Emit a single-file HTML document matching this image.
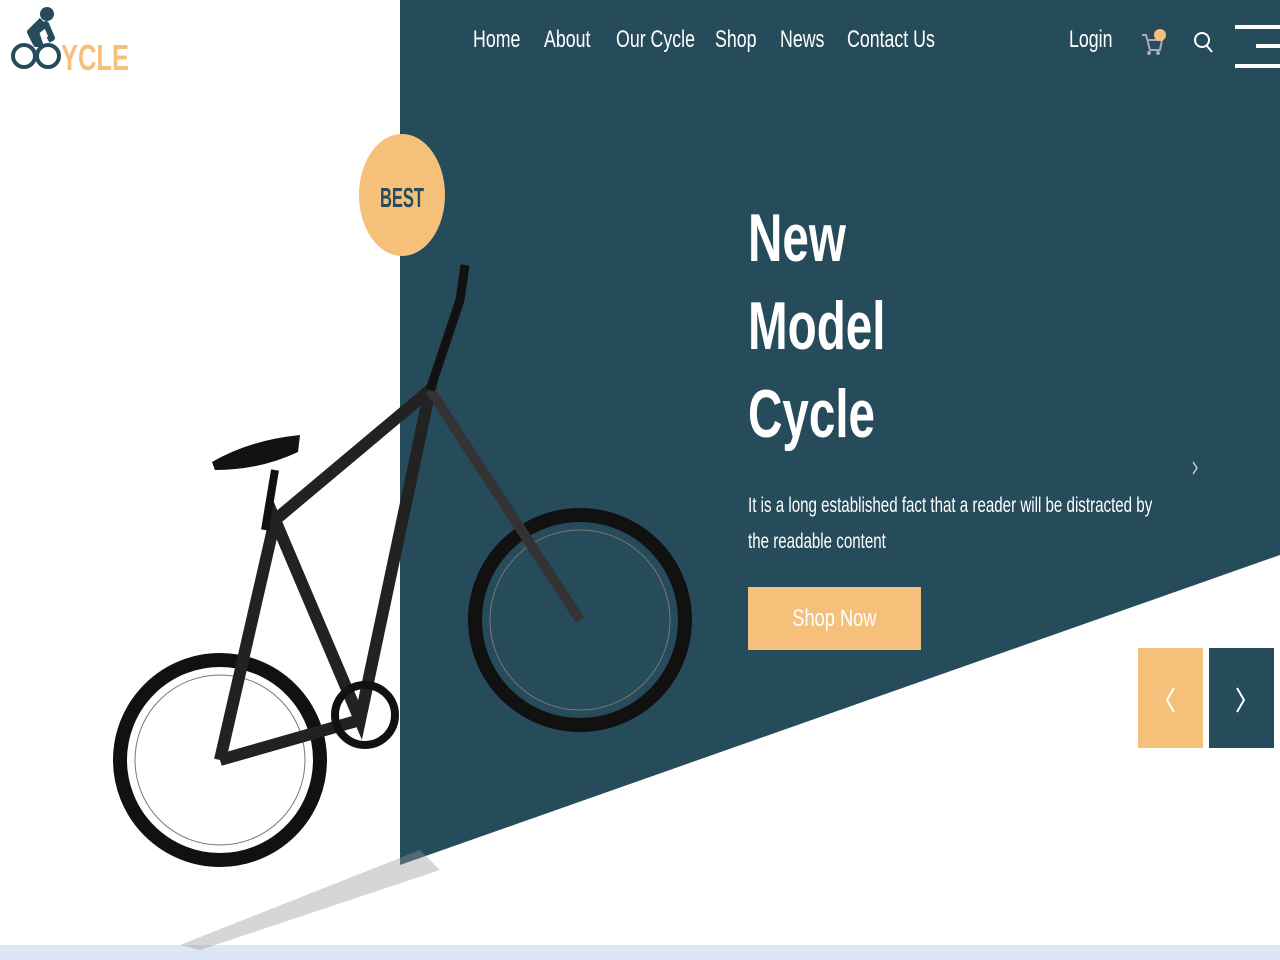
<!DOCTYPE html>
<html><head><meta charset="utf-8"><style>
*{margin:0;padding:0;box-sizing:border-box}
body{width:1280px;height:960px;overflow:hidden;background:#fff;position:relative;font-family:"Liberation Sans",sans-serif}
.n{position:absolute;color:#fff;font-size:24px;top:26px;transform:scaleX(.74);transform-origin:0 0;white-space:nowrap}
.t{position:absolute;color:#fff;transform-origin:0 0}
</style></head><body>
<svg width="1280" height="960" style="position:absolute;left:0;top:0">
<polygon points="400,0 1280,0 1280,555 400,865" fill="#264b5a"/>
<rect x="0" y="945" width="1280" height="15" fill="#dde6f5"/>
<circle cx="47" cy="14" r="7" fill="#264b5a"/>
<path d="M42 20 L30 32 L36 44 L40 44 L36 32 L46 24 L52 38 L48 40" stroke="#264b5a" stroke-width="6" fill="none" stroke-linejoin="round"/>
<circle cx="24" cy="56" r="11" stroke="#264b5a" stroke-width="4" fill="none"/>
<circle cx="48" cy="56" r="11" stroke="#264b5a" stroke-width="4" fill="none"/>
<text x="61" y="70" font-family="Liberation Sans" font-weight="bold" font-size="36" fill="#f5c07a" textLength="68" lengthAdjust="spacingAndGlyphs">YCLE</text>
<ellipse cx="402" cy="195" rx="43" ry="61" fill="#f5c07a"/>
<text x="380" y="207" font-family="Liberation Sans" font-weight="bold" font-size="28" fill="#264b5a" textLength="44" lengthAdjust="spacingAndGlyphs">BEST</text>
<g fill="none" stroke="#111">
<circle cx="220" cy="760" r="100" stroke-width="14"/>
<circle cx="220" cy="760" r="85" stroke-width="1" stroke="#777"/>
<circle cx="580" cy="620" r="105" stroke-width="14"/>
<circle cx="580" cy="620" r="90" stroke-width="1" stroke="#777"/>
<path d="M220 760 L275 520 L360 720 L430 390 L275 520 M220 760 L360 720" stroke-width="12" stroke="#222"/>
<path d="M430 390 L580 620" stroke-width="10" stroke="#333"/>
<path d="M430 390 L460 300 L465 265" stroke-width="9"/>
<circle cx="365" cy="715" r="30" stroke-width="8"/>
<path d="M265 530 L275 470" stroke-width="8"/>
</g>
<path d="M212 462 Q250 440 300 435 L298 452 Q260 470 215 470Z" fill="#111"/>
<path d="M180 945 L420 850 L440 870 L200 950Z" fill="#999" opacity=".4"/>
<path d="M1142 35 L1146 35 L1150 50 L1160 50 L1162 40 L1148 40" stroke="#aab" stroke-width="2" fill="none"/>
<circle cx="1149" cy="53" r="2" fill="#aab"/><circle cx="1158" cy="53" r="2" fill="#aab"/>
<circle cx="1160" cy="35" r="6" fill="#f5c07a"/>
<circle cx="1202" cy="40" r="7" stroke="#fff" stroke-width="2" fill="none"/>
<path d="M1207 46 L1212 52" stroke="#fff" stroke-width="2"/>
<rect x="1235" y="25" width="45" height="4" fill="#fff"/>
<rect x="1256" y="44" width="24" height="4" fill="#fff"/>
<rect x="1235" y="64" width="45" height="4" fill="#fff"/>
<rect x="1138" y="648" width="65" height="100" fill="#f5c07a"/>
<rect x="1209" y="648" width="65" height="100" fill="#264b5a"/>
<path d="M1174 688 L1167 700 L1174 712" stroke="#fff" stroke-width="2" fill="none"/>
<path d="M1237 688 L1244 700 L1237 712" stroke="#fff" stroke-width="2" fill="none"/>
<path d="M1193 462 L1197 468 L1193 474" stroke="#ccc" stroke-width="1.5" fill="none"/>
</svg>
<div class="n" style="left:473px">Home</div>
<div class="n" style="left:544px">About</div>
<div class="n" style="left:616px">Our Cycle</div>
<div class="n" style="left:715px">Shop</div>
<div class="n" style="left:780px">News</div>
<div class="n" style="left:847px">Contact Us</div>
<div class="n" style="left:1069px">Login</div>
<div class="t" style="left:748px;top:194px;font-size:68px;font-weight:bold;line-height:88px;transform:scaleX(.7)">New<br>Model<br>Cycle</div>
<div class="t" style="left:748px;top:488px;font-size:21px;line-height:36px;width:575px;transform:scaleX(.72)">It is a long established fact that a reader will be distracted by the readable content</div>
<div class="t" style="left:748px;top:587px;width:173px;height:63px;background:#f5c07a;font-size:24px;line-height:63px;text-align:center"><span style="display:inline-block;transform:scaleX(.76)">Shop Now</span></div>
</body></html>
